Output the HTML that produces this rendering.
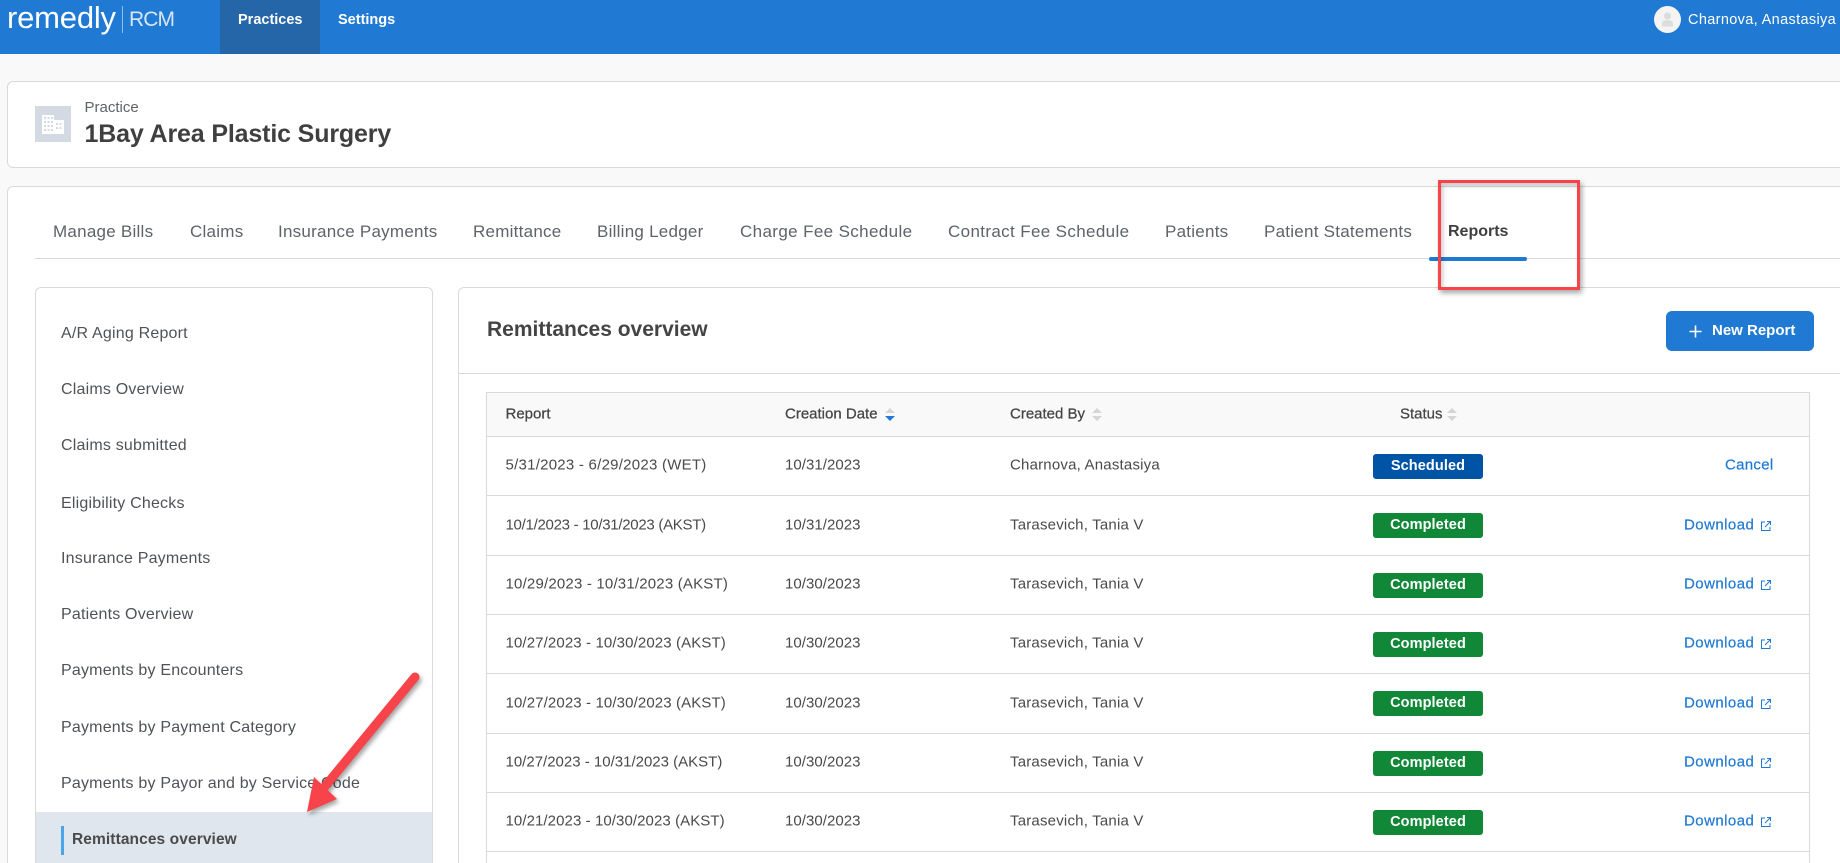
<!DOCTYPE html>
<html lang="en"><head><meta charset="utf-8"><title>Remittances overview</title>
<style>
*{box-sizing:border-box}
html,body{margin:0;padding:0;width:1840px;height:863px;overflow:hidden;background:#f9f9f9}
body{position:relative;font-family:"Liberation Sans",sans-serif;color:#4a4a4a}
.a{position:absolute;white-space:nowrap}
.box{position:absolute;background:#fff;border:1px solid #d9d9d9;border-radius:6px}
.t{position:absolute;white-space:nowrap;line-height:20px;height:20px}
.tab{font-size:17px;letter-spacing:.25px;color:#5f6368;top:222px}
.side{font-size:16px;letter-spacing:.2px;color:#4f5257;left:61px}
.r{position:absolute;left:486px;width:1324px;border-bottom:1px solid #d9d9d9;border-left:1px solid #d9d9d9;border-right:1px solid #d9d9d9;background:#fff}
.c{position:absolute;white-space:nowrap;font-size:15px;color:#4a4a4a;top:50%;transform:translateY(calc(-50% - .5px));line-height:20px}
.c1{left:18.500px;letter-spacing:.12px}.c2{left:298px;letter-spacing:.05px}.c3{left:523px;letter-spacing:.2px}
.badge{position:absolute;left:886px;top:50%;margin-top:-12.5px;width:110px;height:25px;border-radius:3px;color:#fff;font-weight:bold;font-size:14.500px;letter-spacing:.1px;text-align:center;line-height:24px}
.g{background:#118838}.b{background:#0054a6}
.lnk{position:absolute;top:50%;transform:translateY(calc(-50% - .5px));color:#2079d2;font-size:15px;letter-spacing:.45px;-webkit-text-stroke:.2px #2079d2;white-space:nowrap;line-height:20px}
.ic{position:absolute;left:1273px;top:50%;margin-top:-6px}
.h{font-size:15px;color:#444;-webkit-text-stroke:.25px #444;position:absolute;top:50%;transform:translateY(calc(-50% - .5px));white-space:nowrap;line-height:20px}
</style></head><body>

<div class="a" style="left:0;top:0;width:1840px;height:54px;background:#2079d2"></div>
<div class="a" style="left:220px;top:0;width:100px;height:54px;background:#2566a8"></div>
<div class="t" style="left:7px;top:0;font-size:31px;line-height:36px;height:36px;color:#fff;letter-spacing:-.2px">remedly</div>
<div class="a" style="left:122px;top:6px;width:1px;height:27px;background:#8fbce9"></div>
<div class="t" style="left:129px;top:6px;font-size:21px;line-height:28px;height:28px;color:#d6e6f7;letter-spacing:-.9px">RCM</div>
<div class="t" style="left:238px;top:10px;font-size:14.5px;font-weight:bold;color:#fff">Practices</div>
<div class="t" style="left:338px;top:10px;font-size:14.5px;font-weight:bold;color:#fff">Settings</div>
<svg class="a" style="left:1654px;top:6px" width="27" height="27" viewBox="0 0 27 27"><circle cx="13.5" cy="13.5" r="13.5" fill="#f4f4f4"/><circle cx="13.5" cy="10" r="3.6" fill="#dcdcdc"/><path d="M8 20.500v-3c0-2 2-3.400 5.500-3.400s5.500 1.400 5.500 3.400v3z" fill="#dcdcdc"/></svg>
<div class="t" style="left:1688px;top:10px;font-size:14.5px;color:#fff;letter-spacing:.35px">Charnova, Anastasiya</div>

<div class="box" style="left:7px;top:81px;width:1840px;height:87px"></div>
<div class="a" style="left:35px;top:106px;width:36px;height:36px;background:#d3dae3"></div>
<svg class="a" style="left:35px;top:106px" width="36" height="36" viewBox="0 0 36 36"><path d="M7 9h12v5h10v14H7z" fill="#fff"/><g fill="#d3dae3"><rect x="9" y="11" width="2" height="2"/><rect x="12.500" y="11" width="2" height="2"/><rect x="16" y="11" width="2" height="2"/><rect x="9" y="15" width="2" height="2"/><rect x="12.500" y="15" width="2" height="2"/><rect x="9" y="19" width="2" height="2"/><rect x="12.500" y="19" width="2" height="2"/><rect x="9" y="23" width="2" height="2"/><rect x="12.500" y="23" width="2" height="2"/><rect x="16" y="15" width="2" height="2"/><rect x="16" y="19" width="2" height="2"/><rect x="16" y="23" width="2" height="2"/><rect x="21" y="17" width="2" height="2"/><rect x="24.500" y="17" width="2" height="2"/><rect x="21" y="21" width="2" height="2"/><rect x="24.500" y="21" width="2" height="2"/></g></svg>
<div class="t" style="left:84.500px;top:98px;font-size:15px;color:#5f6368">Practice</div>
<div class="t" style="left:84.500px;top:119px;font-size:25px;line-height:30px;height:30px;font-weight:bold;color:#3f3f3f;letter-spacing:-.15px">1Bay Area Plastic Surgery</div>

<div class="box" style="left:7px;top:186px;width:1840px;height:700px"></div>
<div class="a" style="left:35px;top:258px;width:1805px;height:1px;background:#d9d9d9"></div>
<div class="t tab" style="left:53px">Manage Bills</div>
<div class="t tab" style="left:190px">Claims</div>
<div class="t tab" style="left:278px">Insurance Payments</div>
<div class="t tab" style="left:473px">Remittance</div>
<div class="t tab" style="left:597px">Billing Ledger</div>
<div class="t tab" style="left:740px;letter-spacing:.37px">Charge Fee Schedule</div>
<div class="t tab" style="left:948px;letter-spacing:.36px">Contract Fee Schedule</div>
<div class="t tab" style="left:1165px">Patients</div>
<div class="t tab" style="left:1264px">Patient Statements</div>
<div class="t tab" style="left:1448px;color:#3f3f3f;font-weight:bold;font-size:16px;letter-spacing:0">Reports</div>
<div class="a" style="left:1429px;top:257px;width:98px;height:4px;border-radius:2px;background:#2079d2"></div>

<div class="box" style="left:35px;top:287px;width:398px;height:600px"></div>
<div class="t side" style="top:324px">A/R Aging Report</div>
<div class="t side" style="top:380px">Claims Overview</div>
<div class="t side" style="top:436px">Claims submitted</div>
<div class="t side" style="top:494px">Eligibility Checks</div>
<div class="t side" style="top:549px">Insurance Payments</div>
<div class="t side" style="top:605px">Patients Overview</div>
<div class="t side" style="top:661px">Payments by Encounters</div>
<div class="t side" style="top:718px">Payments by Payment Category</div>
<div class="t side" style="top:774px">Payments by Payor and by Service Code</div>
<div class="a" style="left:36px;top:812px;width:396px;height:51px;background:#e0e6ee"></div>
<div class="a" style="left:61px;top:826px;width:3px;height:29px;background:#4aa5e8"></div>
<div class="t" style="left:72px;top:830px;font-size:15.5px;letter-spacing:.1px;font-weight:bold;color:#4a4a4a">Remittances overview</div>

<div class="box" style="left:458px;top:287px;width:1400px;height:600px"></div>
<div class="t" style="left:487px;top:318px;font-size:21px;line-height:24px;height:24px;font-weight:bold;color:#444">Remittances overview</div>
<div class="a" style="left:459px;top:373px;width:1381px;height:1px;background:#d9d9d9"></div>
<div class="a" style="left:1666px;top:311px;width:148px;height:40px;border-radius:6px;background:#2079d2"></div>
<svg class="a" style="left:1688px;top:324px" width="15" height="15" viewBox="0 0 15 15"><path d="M7.500 1.500v12M1.500 7.500h12" stroke="#fff" stroke-width="1.600"/></svg>
<div class="t" style="left:1712px;top:321px;font-size:15px;font-weight:bold;color:#fff">New Report</div>

<div class="r" style="top:392px;height:45px;background:#f9f9f9;border-top:1px solid #d9d9d9">
<span class="h" style="left:18.500px">Report</span><span class="h" style="left:298px">Creation Date</span><span class="h" style="left:523px">Created By</span><span class="h" style="left:913px">Status</span>
<svg class="a" style="left:397px;top:14px" width="12" height="16" viewBox="0 0 12 16"><path d="M6 1l5 5H1z" fill="#d5d5d5"/><path d="M1 9h10l-5 5z" fill="#2079d2"/></svg>
<svg class="a" style="left:604px;top:14px" width="12" height="16" viewBox="0 0 12 16"><path d="M6 1l5 5H1z" fill="#d5d5d5"/><path d="M1 9h10l-5 5z" fill="#d5d5d5"/></svg>
<svg class="a" style="left:959px;top:14px" width="12" height="16" viewBox="0 0 12 16"><path d="M6 1l5 5H1z" fill="#d5d5d5"/><path d="M1 9h10l-5 5z" fill="#d5d5d5"/></svg>
</div>

<div class="r" style="top:437px;height:59px"><span class="c c1" style="letter-spacing:.25px">5/31/2023 - 6/29/2023 (WET)</span><span class="c c2">10/31/2023</span><span class="c c3">Charnova, Anastasiya</span><span class="badge b">Scheduled</span><span class="lnk" style="left:1238px;letter-spacing:.3px">Cancel</span></div>

<div class="r" style="top:496px;height:60px"><span class="c c1" style="letter-spacing:-.28px">10/1/2023 - 10/31/2023 (AKST)</span><span class="c c2">10/31/2023</span><span class="c c3">Tarasevich, Tania V</span><span class="badge g">Completed</span><span class="lnk" style="left:1197px">Download</span><svg class="ic" width="12" height="12" viewBox="0 0 12 12"><path d="M5 2H1.500v8.500H10V7M7 1.500h3.500V5M10.500 1.500L5 7" fill="none" stroke="#2079d2" stroke-width="1"/></svg></div>

<div class="r" style="top:556px;height:59px"><span class="c c1" style="letter-spacing:.19px">10/29/2023 - 10/31/2023 (AKST)</span><span class="c c2">10/30/2023</span><span class="c c3">Tarasevich, Tania V</span><span class="badge g">Completed</span><span class="lnk" style="left:1197px">Download</span><svg class="ic" width="12" height="12" viewBox="0 0 12 12"><path d="M5 2H1.500v8.500H10V7M7 1.500h3.500V5M10.500 1.500L5 7" fill="none" stroke="#2079d2" stroke-width="1"/></svg></div>

<div class="r" style="top:615px;height:59px"><span class="c c1">10/27/2023 - 10/30/2023 (AKST)</span><span class="c c2">10/30/2023</span><span class="c c3">Tarasevich, Tania V</span><span class="badge g">Completed</span><span class="lnk" style="left:1197px">Download</span><svg class="ic" width="12" height="12" viewBox="0 0 12 12"><path d="M5 2H1.500v8.500H10V7M7 1.500h3.500V5M10.500 1.500L5 7" fill="none" stroke="#2079d2" stroke-width="1"/></svg></div>

<div class="r" style="top:674px;height:60px"><span class="c c1">10/27/2023 - 10/30/2023 (AKST)</span><span class="c c2">10/30/2023</span><span class="c c3">Tarasevich, Tania V</span><span class="badge g">Completed</span><span class="lnk" style="left:1197px">Download</span><svg class="ic" width="12" height="12" viewBox="0 0 12 12"><path d="M5 2H1.500v8.500H10V7M7 1.500h3.500V5M10.500 1.500L5 7" fill="none" stroke="#2079d2" stroke-width="1"/></svg></div>

<div class="r" style="top:734px;height:59px"><span class="c c1" style="letter-spacing:0">10/27/2023 - 10/31/2023 (AKST)</span><span class="c c2">10/30/2023</span><span class="c c3">Tarasevich, Tania V</span><span class="badge g">Completed</span><span class="lnk" style="left:1197px">Download</span><svg class="ic" width="12" height="12" viewBox="0 0 12 12"><path d="M5 2H1.500v8.500H10V7M7 1.500h3.500V5M10.500 1.500L5 7" fill="none" stroke="#2079d2" stroke-width="1"/></svg></div>

<div class="r" style="top:793px;height:59px"><span class="c c1" style="letter-spacing:.08px">10/21/2023 - 10/30/2023 (AKST)</span><span class="c c2">10/30/2023</span><span class="c c3">Tarasevich, Tania V</span><span class="badge g">Completed</span><span class="lnk" style="left:1197px">Download</span><svg class="ic" width="12" height="12" viewBox="0 0 12 12"><path d="M5 2H1.500v8.500H10V7M7 1.500h3.500V5M10.500 1.500L5 7" fill="none" stroke="#2079d2" stroke-width="1"/></svg></div>

<div class="a" style="left:486px;top:852px;width:1px;height:11px;background:#d9d9d9"></div>
<div class="a" style="left:1809px;top:852px;width:1px;height:11px;background:#d9d9d9"></div>

<div class="a" style="left:1438px;top:180px;width:142px;height:110px;border:3.5px solid #f6444a;box-shadow:2px 3px 5px rgba(0,0,0,.35),inset 2px 3px 4px rgba(0,0,0,.2)"></div>

<svg class="a" style="left:295px;top:665px;filter:drop-shadow(2px 3px 2px rgba(0,0,0,.35))" width="135" height="160" viewBox="295 665 135 160"><path d="M415 677L322 790" stroke="#f6444a" stroke-width="9" stroke-linecap="round" fill="none"/><path d="M307 812L314 777L337 799z" fill="#f6444a"/></svg>

</body></html>
